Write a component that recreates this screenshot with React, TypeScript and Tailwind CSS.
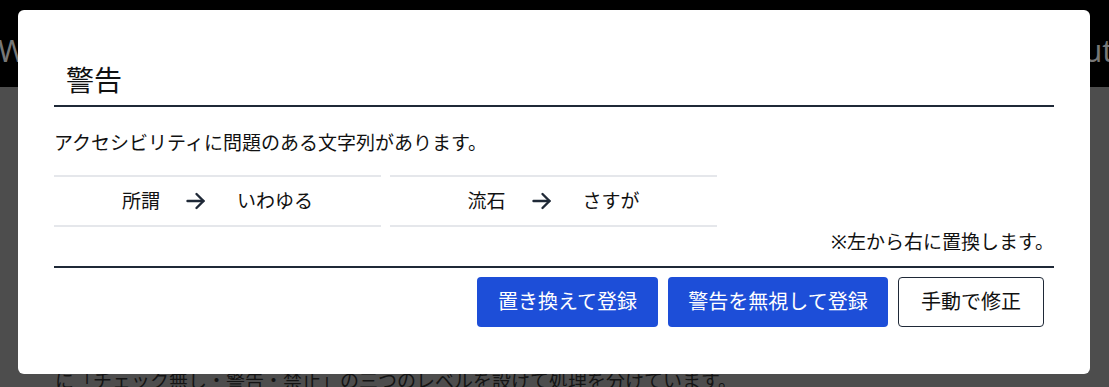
import React from "react"

const jp = "font-['Noto_Sans','Noto_Sans_CJK_JP',sans-serif]"

const pairs = [
  { from: "所謂", to: "いわゆる" },
  { from: "流石", to: "さすが" },
]

function Arrow() {
  return (
    <svg width="20" height="20" viewBox="0 0 20 20" fill="none" className="ml-[26px] mr-[31px] shrink-0">
      <path d="M1.5 10h16" stroke="#1f2937" strokeWidth="2.4" strokeLinecap="round" />
      <path d="M10.5 3l7 7-7 7" stroke="#1f2937" strokeWidth="2.4" strokeLinecap="round" strokeLinejoin="round" />
    </svg>
  )
}

export default function App() {
  return (
    <div className={`relative w-full h-[387px] overflow-hidden bg-[#4d4d4d] ${jp}`}>
      {/* page behind the backdrop */}
      <div className="h-[87px] bg-black flex items-center justify-between pt-[14px] text-[30px] text-[#777]">
        <span className="-ml-[2px]">WebA11y</span>
        <span className="-mr-[4px]">About</span>
      </div>
      <p className="pl-[55px] pt-[280px] text-[19px] leading-[28px] text-[#141414] whitespace-nowrap">
        に「チェック無し・警告・禁止」の三つのレベルを設けて処理を分けています。
      </p>

      {/* dialog */}
      <div className="absolute left-[18px] top-[10px] w-[1072px] h-[364px] bg-white rounded-md px-9 pt-[50px] text-[#111]">
        <h2 className="text-[28px] leading-[40px] pl-3 pb-[5px] border-b-2 border-[#1f2937]">警告</h2>
        <p className="mt-[22px] text-[19px] leading-[28px]">アクセシビリティに問題のある文字列があります。</p>

        <div className="mt-[18px] flex gap-[9px]">
          {pairs.map((p) => (
            <div
              key={p.from}
              className="w-[327px] h-[52px] border-y-2 border-[#e5e7eb] flex items-center justify-center text-[19px]"
            >
              <span>{p.from}</span>
              <Arrow />
              <span>{p.to}</span>
            </div>
          ))}
        </div>

        <div className="mt-[1px] pb-[10px] border-b-2 border-[#1f2937] text-right text-[19px] leading-[28px]">
          ※左から右に置換します。
        </div>

        <div className="mt-[9px] mr-[10px] flex justify-end gap-[10px] text-[20px]">
          <button className="w-[181px] h-[50px] rounded bg-[#1d4ed8] text-white">置き換えて登録</button>
          <button className="w-[220px] h-[50px] rounded bg-[#1d4ed8] text-white">警告を無視して登録</button>
          <button className="w-[146px] h-[50px] rounded border border-[#1f2937] bg-white text-[#111]">手動で修正</button>
        </div>
      </div>
    </div>
  )
}
